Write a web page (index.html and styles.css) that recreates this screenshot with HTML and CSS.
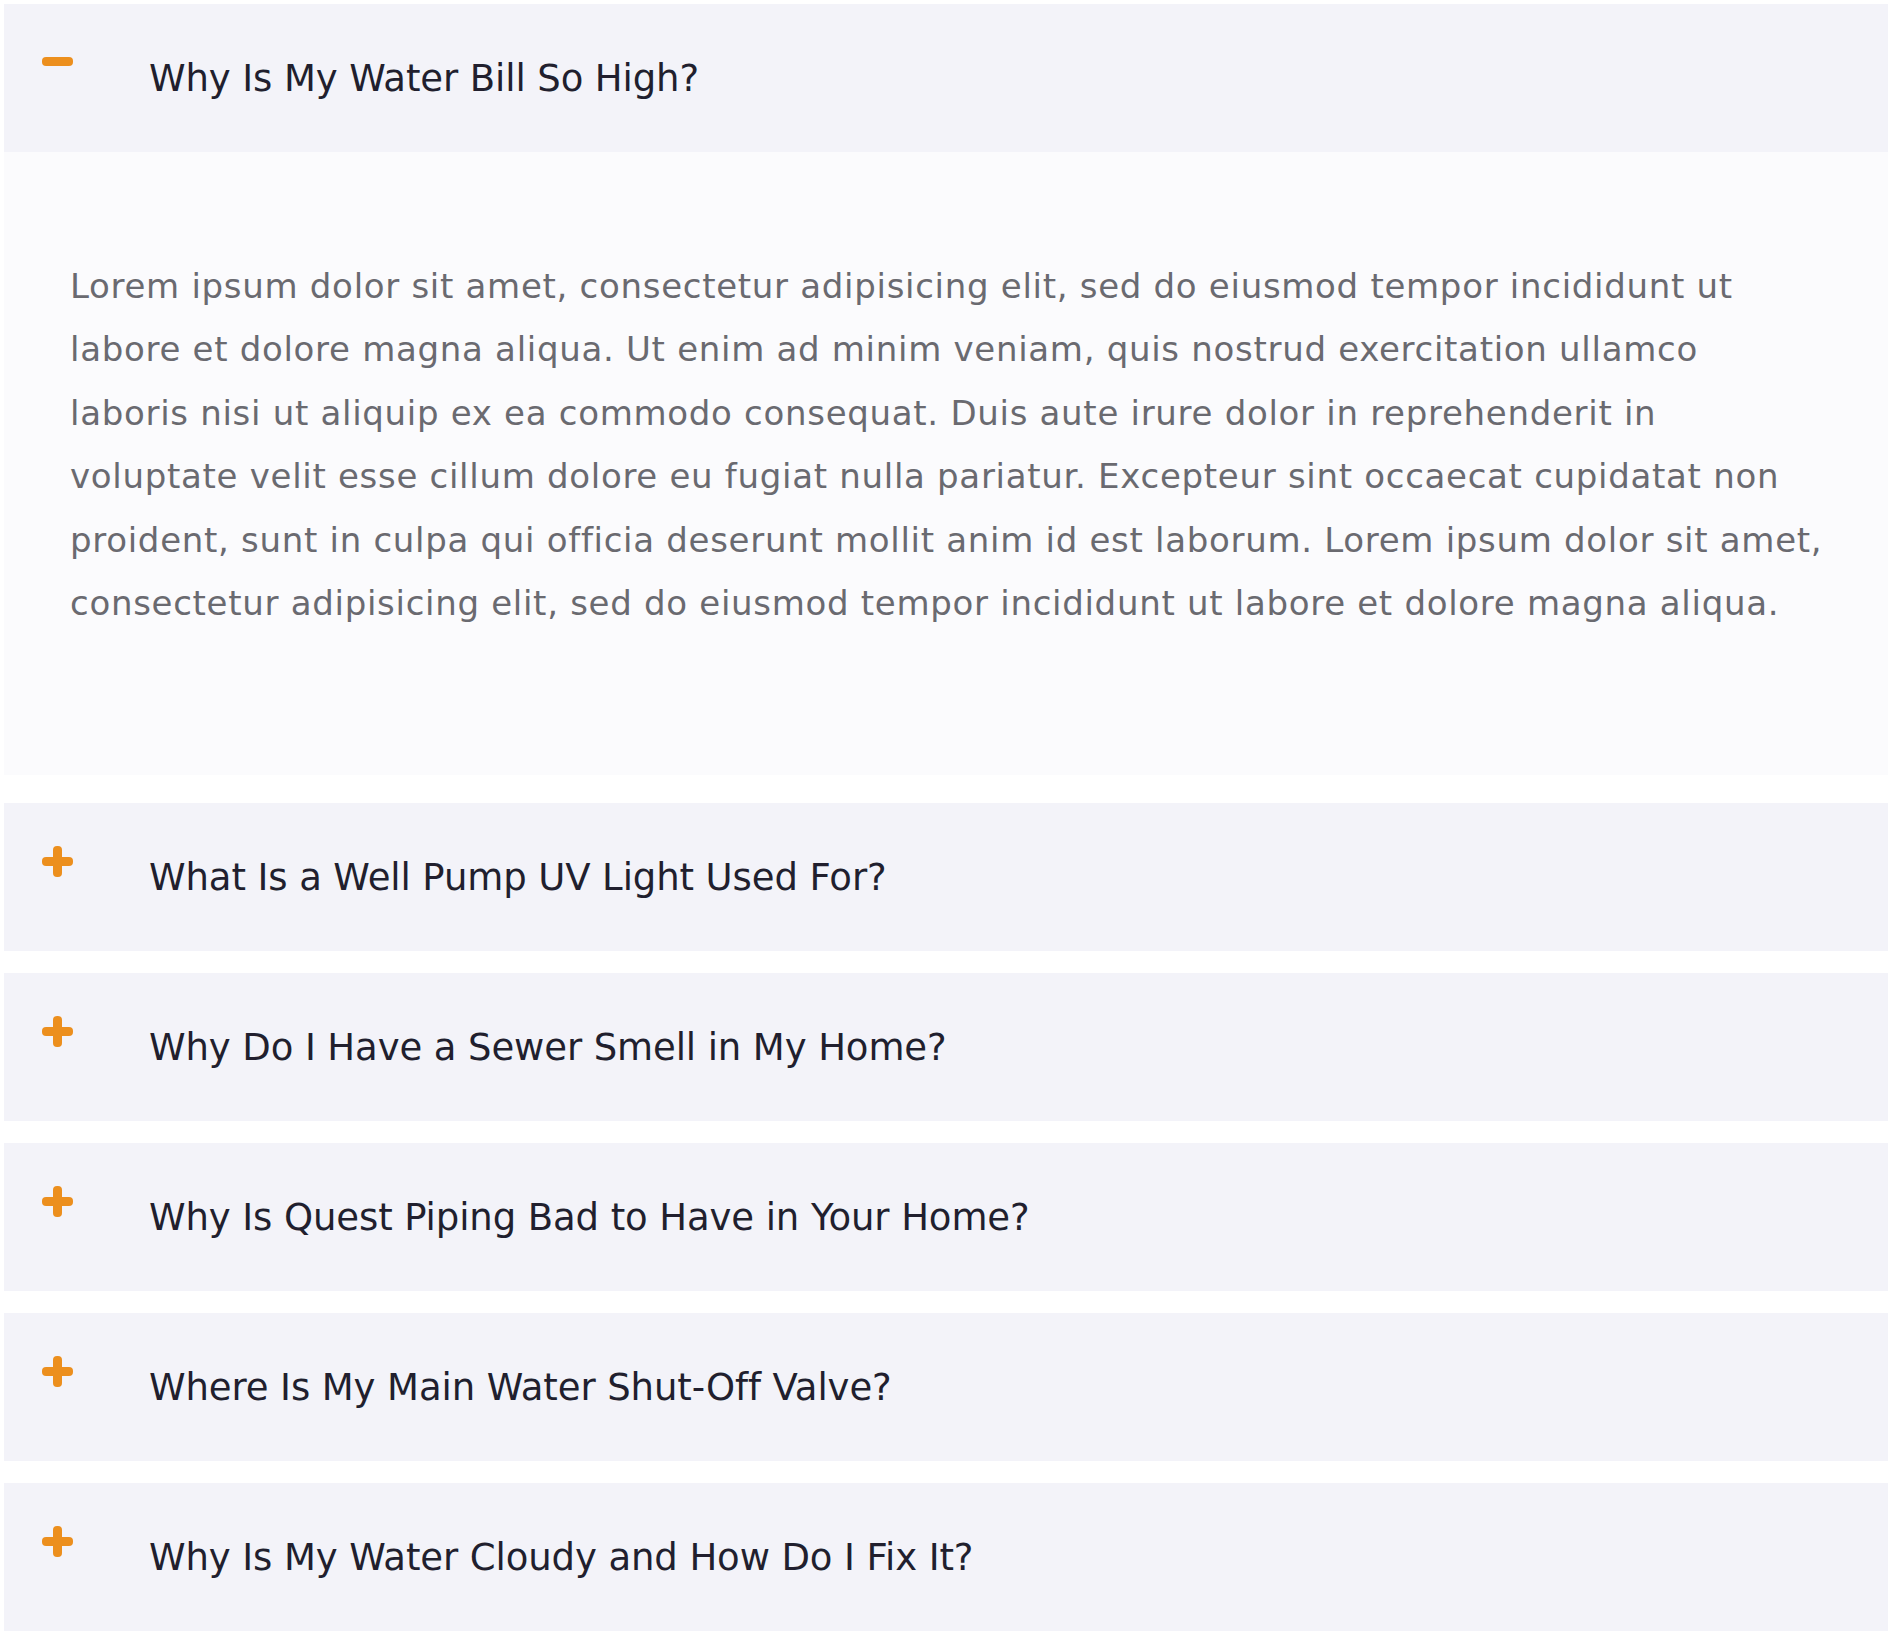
FILE: index.html
```html
<!DOCTYPE html>
<html lang="en">
<head>
<meta charset="utf-8">
<title>FAQ</title>
<link rel="stylesheet" href="styles.css">
</head>
<body>
<div class="faq">
  <div class="item open">
    <div class="head">
      <span class="icon minus"></span>
      <h3 class="title">Why Is My Water Bill So High?</h3>
    </div>
    <div class="body">
      <p>Lorem ipsum dolor sit amet, consectetur adipisicing elit, sed do eiusmod tempor incididunt ut<br>
      labore et dolore magna aliqua. Ut enim ad minim veniam, quis nostrud exercitation ullamco<br>
      laboris nisi ut aliquip ex ea commodo consequat. Duis aute irure dolor in reprehenderit in<br>
      voluptate velit esse cillum dolore eu fugiat nulla pariatur. Excepteur sint occaecat cupidatat non<br>
      proident, sunt in culpa qui officia deserunt mollit anim id est laborum. Lorem ipsum dolor sit amet,<br>
      consectetur adipisicing elit, sed do eiusmod tempor incididunt ut labore et dolore magna aliqua.</p>
    </div>
  </div>
  <div class="item">
    <div class="head">
      <span class="icon plus"></span>
      <h3 class="title">What Is a Well Pump UV Light Used For?</h3>
    </div>
  </div>
  <div class="item">
    <div class="head">
      <span class="icon plus"></span>
      <h3 class="title">Why Do I Have a Sewer Smell in My Home?</h3>
    </div>
  </div>
  <div class="item">
    <div class="head">
      <span class="icon plus"></span>
      <h3 class="title">Why Is Quest Piping Bad to Have in Your Home?</h3>
    </div>
  </div>
  <div class="item">
    <div class="head">
      <span class="icon plus"></span>
      <h3 class="title">Where Is My Main Water Shut-Off Valve?</h3>
    </div>
  </div>
  <div class="item">
    <div class="head">
      <span class="icon plus"></span>
      <h3 class="title">Why Is My Water Cloudy and How Do I Fix It?</h3>
    </div>
  </div>
</div>
</body>
</html>
```

FILE: styles.css
```css
html, body {
  margin: 0;
  padding: 0;
  background: #ffffff;
}

body {
  font-family: "DejaVu Sans", "Open Sans", sans-serif;
}

.faq {
  width: 1884px;
  margin: 4px 0 0 4px;
  display: flex;
  flex-direction: column;
}

.item + .item {
  margin-top: 22px;
}

.item.open + .item {
  margin-top: 28px;
}

.head {
  height: 148px;
  background: #f3f3f9;
  display: flex;
  align-items: center;
  padding-left: 38px;
  box-sizing: border-box;
}

.icon {
  position: relative;
  flex: 0 0 31px;
  width: 31px;
  align-self: flex-start;
}

.icon.minus {
  height: 9px;
  margin-top: 53px;
  background: #ec8f1e;
  border-radius: 4px;
}

.icon.plus {
  height: 31px;
  margin-top: 43px;
}

.icon.plus::before,
.icon.plus::after {
  content: "";
  position: absolute;
  background: #ec8f1e;
  border-radius: 4px;
}

.icon.plus::before {
  left: 0;
  right: 0;
  top: 11px;
  height: 9px;
}

.icon.plus::after {
  top: 0;
  bottom: 0;
  left: 11px;
  width: 9px;
}

.title {
  margin: 0 0 0 76px;
  font-weight: 400;
  font-size: 37px;
  color: #211f2e;
  letter-spacing: -0.1px;
}

.body {
  height: 623px;
  background: #fbfbfd;
  padding: 103px 30px 0 66px;
  box-sizing: border-box;
}

.body p {
  margin: 0;
  font-size: 34px;
  line-height: 63.4px;
  letter-spacing: 0.7px;
  color: #6a6a70;
  white-space: nowrap;
}
```
